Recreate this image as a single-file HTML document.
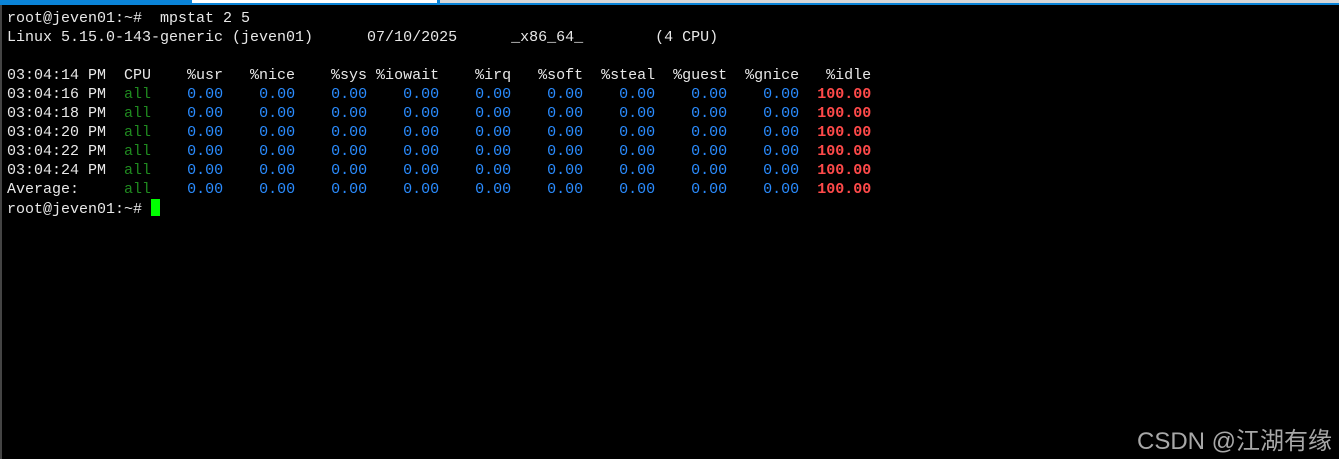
<!DOCTYPE html><html><head><style>
body{margin:0;width:1339px;height:459px;background:#000;overflow:hidden;position:relative;font-family:"Liberation Mono",monospace;}
.top{position:absolute;left:0;top:0;width:1339px;height:5px;background:#0a84d8}
.t1{position:absolute;left:192px;top:0;width:245px;height:3px;background:#fff}
.t2{position:absolute;left:440px;top:0;width:899px;height:3px;background:#d8d8d8}
.lb{position:absolute;left:0;top:5px;width:2px;height:454px;background:#444}
pre{position:absolute;left:7px;top:9px;margin:0;font-size:15px;line-height:19px;color:#e8e8e8;font-family:"Liberation Mono",monospace}
.g{color:#1f8a1f}.b{color:#2a8cff}.r{color:#ff4a4a;font-weight:bold}
.cur{display:inline-block;width:9px;height:17px;background:#00ff00;vertical-align:-3px}
.wm{position:absolute;left:1137px;top:421px;font-family:"Liberation Sans","Noto Sans CJK SC",sans-serif;font-size:24px;color:#a8a8a8}
</style></head><body>
<div class="top"></div><div class="t1"></div><div class="t2"></div><div class="lb"></div>
<pre>root@jeven01:~#  mpstat 2 5
Linux 5.15.0-143-generic (jeven01)      07/10/2025      _x86_64_        (4 CPU)

03:04:14 PM  CPU    %usr   %nice    %sys %iowait    %irq   %soft  %steal  %guest  %gnice   %idle
03:04:16 PM  <span class="g">all</span>    <span class="b">0.00    0.00    0.00    0.00    0.00    0.00    0.00    0.00    0.00</span>  <span class="r">100.00</span>
03:04:18 PM  <span class="g">all</span>    <span class="b">0.00    0.00    0.00    0.00    0.00    0.00    0.00    0.00    0.00</span>  <span class="r">100.00</span>
03:04:20 PM  <span class="g">all</span>    <span class="b">0.00    0.00    0.00    0.00    0.00    0.00    0.00    0.00    0.00</span>  <span class="r">100.00</span>
03:04:22 PM  <span class="g">all</span>    <span class="b">0.00    0.00    0.00    0.00    0.00    0.00    0.00    0.00    0.00</span>  <span class="r">100.00</span>
03:04:24 PM  <span class="g">all</span>    <span class="b">0.00    0.00    0.00    0.00    0.00    0.00    0.00    0.00    0.00</span>  <span class="r">100.00</span>
Average:     <span class="g">all</span>    <span class="b">0.00    0.00    0.00    0.00    0.00    0.00    0.00    0.00    0.00</span>  <span class="r">100.00</span>
root@jeven01:~# <span class="cur"></span></pre>
<div class="wm">CSDN @江湖有缘</div>
</body></html>
